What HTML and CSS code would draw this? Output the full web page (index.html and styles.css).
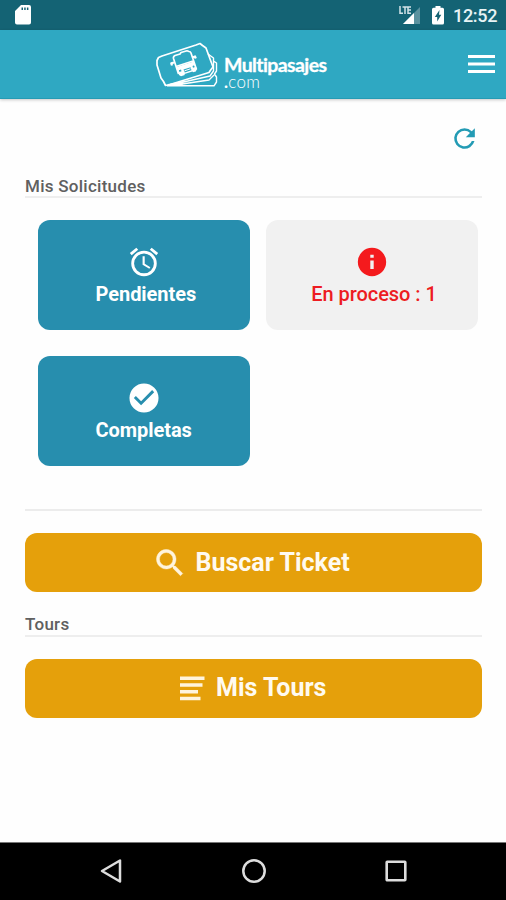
FILE: index.html
```html
<!DOCTYPE html>
<html lang="es">
<head>
<meta charset="utf-8">
<title>Multipasajes.com</title>
<link rel="stylesheet" href="styles.css">
</head>
<body>
<div class="screen">
  <div class="status">
    <svg class="sd" width="16" height="20" viewBox="0 0 16 20"><path fill="#fff" fill-rule="evenodd" d="M6 0H14Q16 0 16 2V17.500Q16 19.500 14 19.500H2Q0 19.500 0 17.500V6ZM6.500 2.500V5H8V2.500ZM9.200 2.500V5H10.700V2.500ZM11.900 2.500V5H13.400V2.500Z"/></svg>
    <div class="status-right">
      <svg class="signal" width="22" height="20" viewBox="0 0 22 20"><path fill="#5b929f" d="M21 1V18H4Z"/><path fill="#fff" d="M15 7V18H4Z"/><path fill="none" stroke="#d3e4e8" stroke-width="1.500" d="M1 0V7.300H4M3.500 1H8.500M6 1V8M12 1H9V7.300H12M9 4H12"/></svg>
      <svg class="battery" width="12" height="19" viewBox="0 0 12 19"><path fill="#fff" d="M3.500 0H8.500V1.800H10.500Q12 1.800 12 3.300V17Q12 18.500 10.500 18.500H1.500Q0 18.500 0 17V3.300Q0 1.800 1.500 1.800H3.500Z"/><path fill="#146374" d="M7.500 4L2.800 11H5.200V15.500L9.300 8.800H7Z"/></svg>
      <span class="clock">12:52</span>
    </div>
  </div>
  <header class="bar">
    <div class="logo">
      <svg width="66" height="50" viewBox="153 40 66 50">
        <g fill="none" stroke="#fff" stroke-width="1.700" stroke-linejoin="round">
          <path d="M157 60.500L158.500 57.500L162 56L196 45L200 43.500L202.500 45.500L206 48L213 67L211 69.500L209 72.500L170 84.500L165.500 85.500L163.500 81.500L161 78L157 65Z"/>
          <path stroke-width="1.400" d="M208 54L213.500 58V71L210 76L168 85.500M213.500 61L216.500 63V71L214.500 74L216.500 77V82L214 85.800H167M214 75L209 80L172 85.500"/>
          <path d="M178.500 74L173.500 58.500Q173 56.500 175 55.500L180 54L181 52.500L187 50.800L189 51.500Q190.500 51.500 191 53L196.500 69.500M176 66.500L193 61"/>
          <path stroke-width="2.200" d="M174 62.500L171.300 63.300L172 65.500M192 57.500L195 56.500L195.800 58.500"/>
        </g>
        <path fill="#fff" fill-rule="evenodd" d="M176.500 67L193.500 61.500L197 69L195.800 71.500L193 72.300L192.500 71.500L184.500 74L184.800 75L181 76.200L179 75ZM183.500 69.500L184.800 72.500L191.500 70.300L190.500 67.200ZM178.800 70.300L179.500 72L181.500 71.300L181 69.500ZM192.500 66L193 67.700L195 67L194.300 65.300Z"/>
        <path d="M184.500 70.800L190.500 68.800" stroke="#fff" stroke-width="1"/>
        <path fill="#fff" d="M168 84L184 81L182 86H167Z"/>
      </svg>
      <div class="wordmark"><span class="brand">Multipasajes</span><span class="brand-com"><b>.</b>com</span></div>
    </div>
    <svg class="menu" width="27" height="20" viewBox="0 0 27 20"><path stroke="#fff" stroke-width="3" d="M0 2.500H27M0 10H27M0 17.500H27"/></svg>
  </header>
  <main class="content">
    <div class="refresh"><svg width="31" height="31" viewBox="0 0 24 24"><path fill="#239bb4" d="M17.650 6.350A7.958 7.958 0 0 0 12 4a8 8 0 1 0 7.730 10h-2.080A6 6 0 1 1 12 6c1.660 0 3.140.69 4.220 1.780L13 11h7V4z"/></svg></div>
    <h2 class="heading">Mis Solicitudes</h2>
    <div class="tiles">
      <div class="tile">
        <svg width="34" height="34" viewBox="0 0 24 24"><path fill="#fff" d="M22 5.720l-4.600-3.860-1.290 1.530 4.600 3.860zM7.880 3.390L6.600 1.860 2 5.710l1.290 1.530zM12.500 8H11v6l4.750 2.850.75-1.230-4-2.370zM12 4a9 9 0 1 0 0 18 9 9 0 0 0 0-18m0 16a7 7 0 1 1 0-14 7 7 0 0 1 0 14"/></svg>
        <span class="label left">Pendientes</span>
      </div>
      <div class="tile active">
        <svg width="34" height="34" viewBox="0 0 24 24"><path fill="#f41a1d" d="M12 2a10 10 0 1 0 0 20 10 10 0 0 0 0-20m1.200 15h-2.400v-6h2.400zm0-8h-2.400V6.800h2.400z"/></svg>
        <span class="label">En proceso : 1</span>
      </div>
      <div class="tile">
        <svg width="34" height="34" viewBox="0.300 0.300 23.400 23.400"><path fill="#fff" d="M12 2a10 10 0 1 0 0 20 10 10 0 0 0 0-20m-2 15-5-5 1.410-1.410L10 14.170l7.590-7.590L19 8z"/></svg>
        <span class="label left">Completas</span>
      </div>
    </div>
    <hr class="rule">
    <button class="action search"><svg width="36" height="36" viewBox="0 0 24 24"><path fill="#fff4dd" stroke="#fff4dd" stroke-width=".3" d="M15.500 14h-.79l-.28-.27A6.500 6.500 0 1 0 13.730 14.430l.27.28v.79l5 4.990L20.490 19zm-6 0a4.500 4.500 0 1 1 0-9 4.500 4.500 0 0 1 0 9"/></svg><span>Buscar Ticket</span></button>
    <h2 class="heading second">Tours</h2>
    <button class="action tours"><svg width="25" height="25" viewBox="0 0 25 25"><path stroke="#fff4dd" stroke-width="3.600" d="M0 2.300H24.500M0 9H22.500M0 15.700H18M0 22.500H20.500"/></svg><span>Mis Tours</span></button>
  </main>
  <nav class="navbar">
    <svg width="22" height="26" viewBox="0 0 22 26"><path fill="none" stroke="#ddd" stroke-width="2.500" stroke-linejoin="round" d="M2 13L20 2.500V23.500Z"/></svg>
    <svg width="26" height="26" viewBox="0 0 26 26"><circle cx="13" cy="13" r="10.700" fill="none" stroke="#ddd" stroke-width="2.500"/></svg>
    <svg width="22" height="26" viewBox="0 0 22 26"><rect x="1.700" y="3.700" width="18.600" height="18.600" rx=".5" fill="none" stroke="#ddd" stroke-width="2.600"/></svg>
  </nav>
</div>
</body>
</html>
```

FILE: styles.css
```css
* { box-sizing: border-box; }
body { margin: 0; background: #fefefe; font-family: Roboto, sans-serif; }
.screen { width: 506px; height: 900px; display: flex; flex-direction: column; overflow: hidden; }
.status { height: 30px; flex: none; background: #146374; display: flex; justify-content: space-between; padding: 5px 9px 0 15px; }
.status-right { display: flex; }
.signal { margin: 1px 11px 0 0; }
.battery { margin: 1px 9px 0 0; }
.clock { font-size: 18px; line-height: 22px; font-weight: 500; color: #e8f3f5; width: 44px; white-space: nowrap; letter-spacing: -.3px; }
.bar { height: 69px; flex: none; background: #2fa8c2; border-bottom: 1px solid #259bb4; box-shadow: 0 1px 3px rgba(0,0,0,.22); display: flex; justify-content: space-between; padding: 5px 11px 0 153px; }
.logo { display: flex; padding-top: 5px; }
.wordmark { display: flex; flex-direction: column; margin-left: 5px; padding-top: 15px; color: #fff; white-space: nowrap; }
.brand { font: 700 19.500px/20px Lato, sans-serif; letter-spacing: -.6px; -webkit-text-stroke: .3px #fff; }
.brand-com { font: 300 17px/14px Lato, sans-serif; letter-spacing: .3px; }
.brand-com b { font-weight: 700; }
.menu { margin-top: 19px; }
.content { flex: 1; padding: 24px 24px 0 25px; }
.refresh { display: flex; justify-content: flex-end; height: 32px; padding-right: 2px; }
.heading { margin: 20px 0 0; height: 23px; border-bottom: 2px solid #eee; font-size: 17px; line-height: 22px; font-weight: 500; color: #606060; white-space: nowrap; letter-spacing: .27px; }
.tiles { display: grid; grid-template-columns: 212px 212px; grid-auto-rows: 110px; gap: 26px 16.500px; margin: 22px 0 0 12.500px; }
.tile { background: #278eae; border-radius: 12px; display: flex; flex-direction: column; align-items: center; padding-top: 25px; color: #fff; }
.active { background: #f1f1f1; color: #ed1c22; }
.label { font-size: 20px; line-height: 26px; font-weight: 700; margin-top: 2px; white-space: nowrap; letter-spacing: -.05px; }
.left { align-self: flex-start; margin-left: 58px; }
.active .label { font-weight: 500; padding-left: 4px; }
.rule { margin: 43px 0 0; border: 0; height: 2px; background: #ececec; }
.action { margin: 22px 0 0; border: 0; width: 457px; height: 59px; border-radius: 12px; background: #e5a00b; color: #fffaf0; font: 700 25px/30px Roboto, sans-serif; display: flex; align-items: center; white-space: nowrap; }
.search { padding: 0 0 0 127px; }
.search span { margin-left: 7.500px; }
.second { margin-top: 21px; height: 24px; }
.tours { padding: 0 0 0 155px; margin-top: 21.500px; }
.tours span { margin-left: 11px; }
.navbar { height: 58px; flex: none; background: #000; border-top: 1px solid #777; display: flex; justify-content: space-between; padding: 15px 99px 0 100px; }
```
